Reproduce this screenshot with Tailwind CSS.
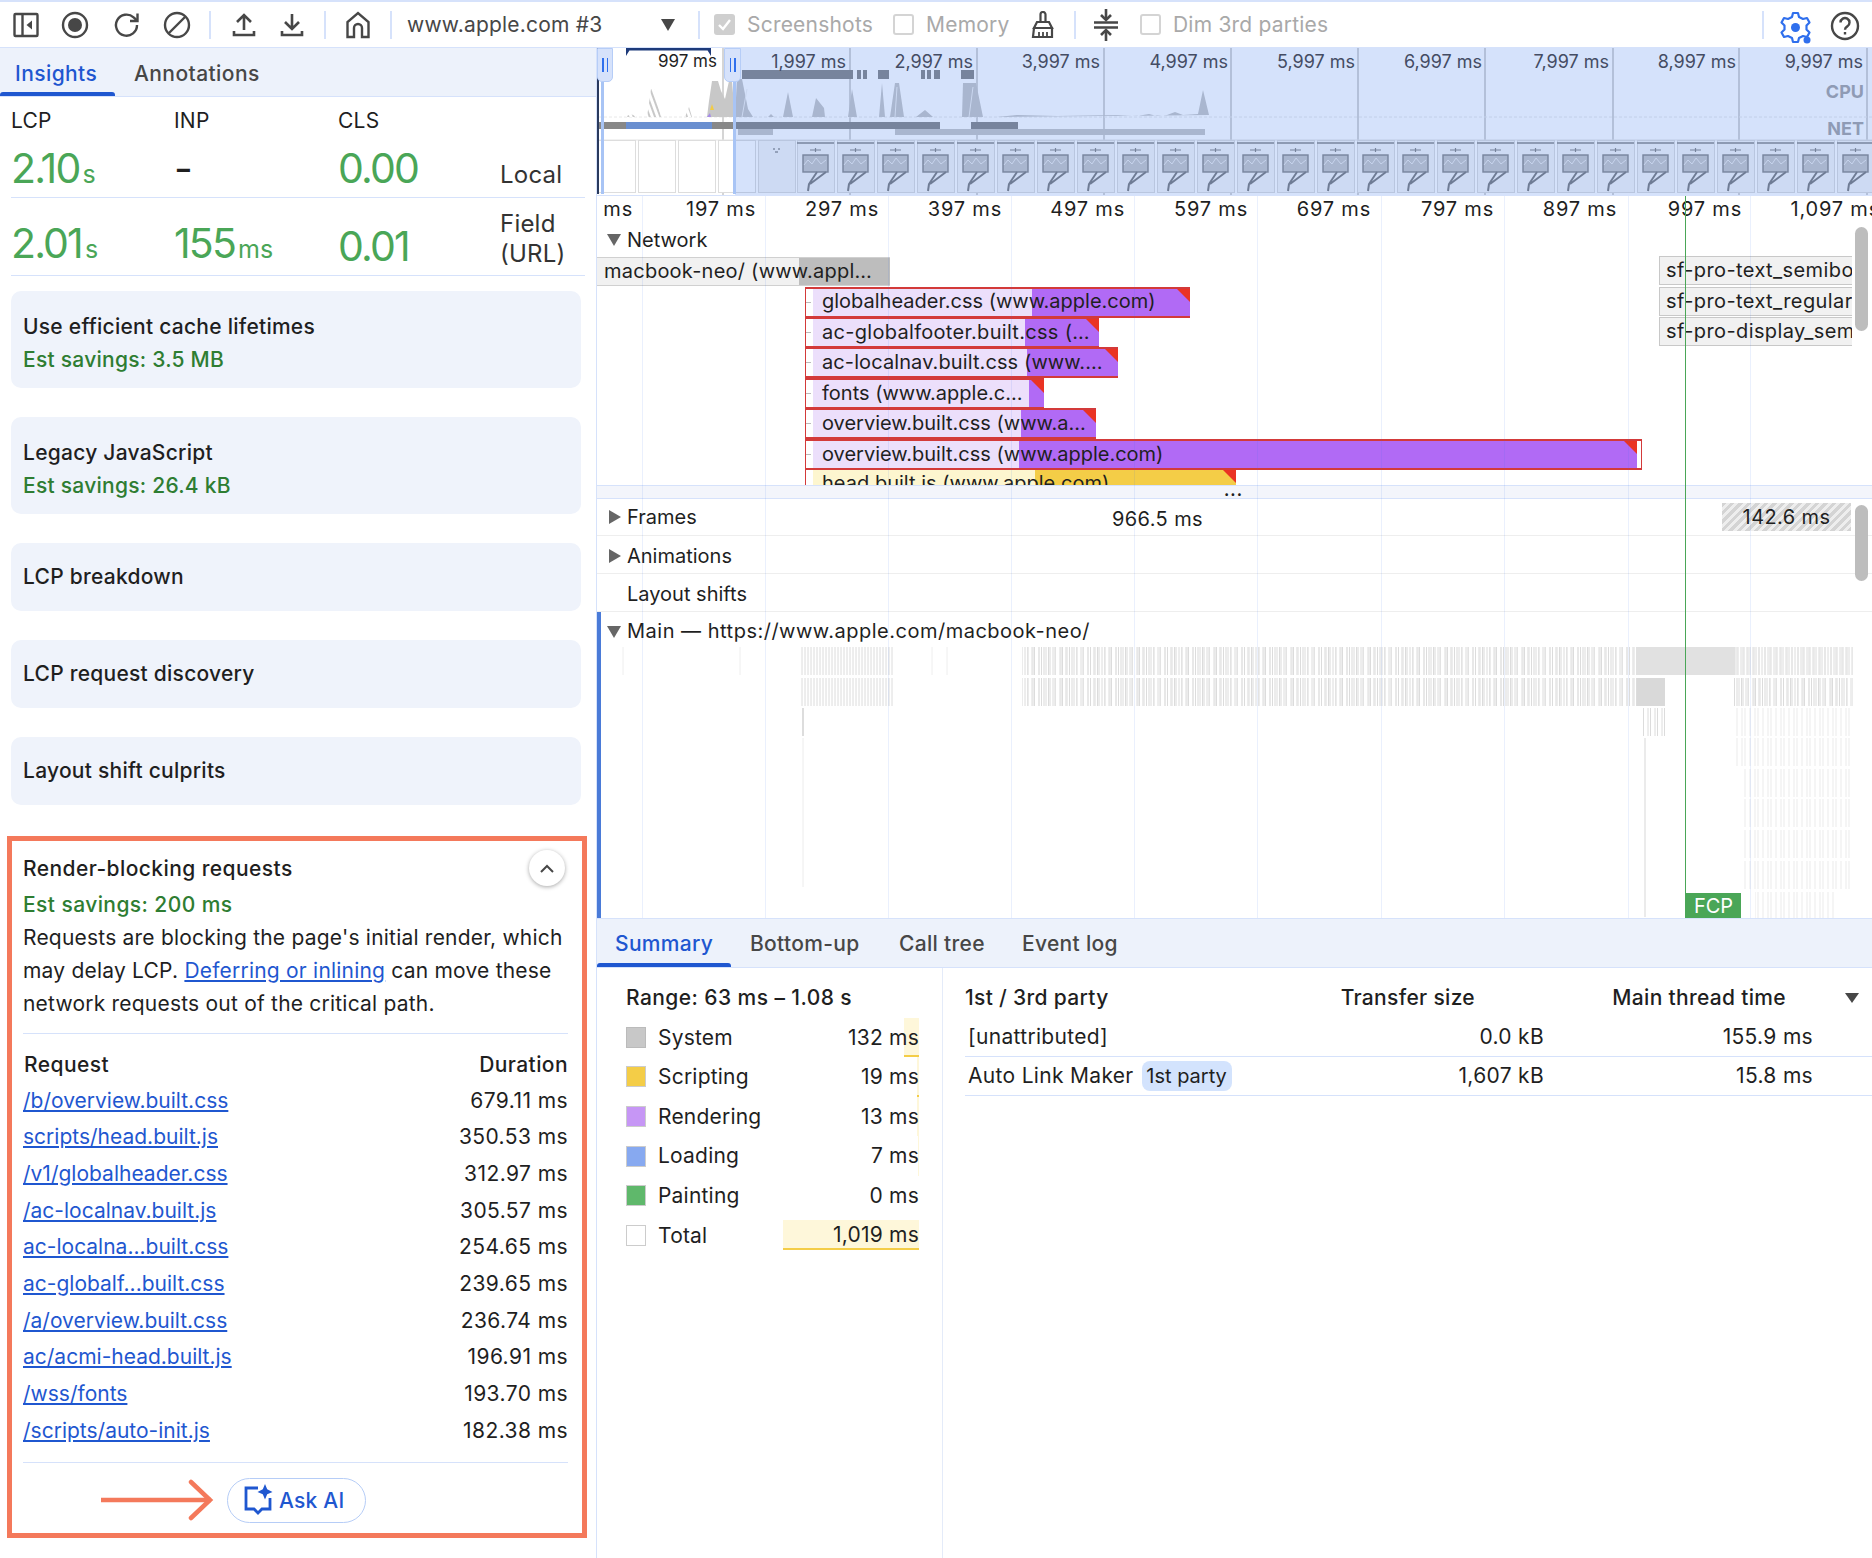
<!DOCTYPE html>
<html lang="en">
<head>
<meta charset="UTF-8">
<title>Performance insights</title>
<script src="https://cdn.jsdelivr.net/npm/@tailwindcss/browser@4"></script>
</head>
<body class="bg-white">
<div class="w-[1872px] h-[1558px] overflow-hidden flex flex-col font-['Inter','Liberation_Sans',sans-serif] text-[21px] tracking-[.01em] text-[#1f1f1f]">

  <!-- toolbar -->
  <header class="h-[48px] shrink-0 border-t-2 border-b border-[#d6e2fb] flex items-center text-[#474747] relative">
    <svg class="w-[26px] h-[26px] ml-[13px]" viewBox="0 0 26 26" fill="none" stroke="#474747" stroke-width="2.4"><rect x="1.5" y="2" width="23" height="22" rx="1"/><path d="M9.5 2v22"/><path d="M19 8.500v9l-5.500-4.500z" fill="#474747" stroke="none"/></svg>
    <svg class="w-[28px] h-[28px] ml-[22px]" viewBox="0 0 28 28" fill="none"><circle cx="14" cy="14" r="12" stroke="#474747" stroke-width="2.4"/><circle cx="14" cy="14" r="7" fill="#474747"/></svg>
    <svg class="w-[28px] h-[28px] ml-[24px]" viewBox="0 0 28 28" fill="none" stroke="#474747" stroke-width="2.4"><path d="M24 14a10.500 10.500 0 1 1-3.400-7.600L24 9.500"/><path d="M24.500 2.500v7.500h-7.500"/></svg>
    <svg class="w-[28px] h-[28px] ml-[22px]" viewBox="0 0 28 28" fill="none" stroke="#474747" stroke-width="2.4"><circle cx="14" cy="14" r="12"/><path d="M6 22L22 6"/></svg>
    <span class="w-[2px] h-[28px] bg-[#d6e2fb] ml-[18px]"></span>
    <svg class="w-[24px] h-[26px] ml-[21px]" viewBox="0 0 24 26" fill="none" stroke="#474747" stroke-width="2.6"><path d="M12 18V3M5 10l7-7 7 7"/><path d="M2 19v4h20v-4"/></svg>
    <svg class="w-[24px] h-[26px] ml-[24px]" viewBox="0 0 24 26" fill="none" stroke="#474747" stroke-width="2.6"><path d="M12 2v15M5 10l7 7 7-7"/><path d="M2 19v4h20v-4"/></svg>
    <span class="w-[2px] h-[28px] bg-[#d6e2fb] ml-[20px]"></span>
    <svg class="w-[26px] h-[28px] ml-[19px]" viewBox="0 0 26 28" fill="none" stroke="#474747" stroke-width="2.4"><path d="M2.500 26V11L13 2l10.500 9v15h-6.500v-9a4 4 0 0 0-8 0v9z"/></svg>
    <span class="w-[2px] h-[28px] bg-[#d6e2fb] ml-[19px]"></span>
    <span class="ml-[15px] w-[254px] whitespace-nowrap text-[#474747]">www.apple.com #3</span>
    <span class="w-0 h-0 border-x-[7px] border-x-transparent border-t-[12px] border-t-[#474747]"></span>
    <span class="w-[2px] h-[28px] bg-[#d6e2fb] ml-[23px]"></span>
    <span class="ml-[14px] w-[21px] h-[21px] rounded-[3px] bg-[#cfcfcf] flex items-center justify-center"><svg class="w-[15px] h-[15px]" viewBox="0 0 15 15" fill="none" stroke="white" stroke-width="2.4"><path d="M2 8l4 4 7-9"/></svg></span>
    <span class="ml-[12px] text-[#a9a9a9] w-[146px]">Screenshots</span>
    <span class="w-[21px] h-[21px] rounded-[3px] border-2 border-[#d4d4d4]"></span>
    <span class="ml-[12px] text-[#a9a9a9] w-[91px]">Memory</span>
    <svg class="w-[26px] h-[28px] ml-[13px]" viewBox="0 0 26 28" fill="none" stroke="#474747" stroke-width="2.2"><path d="M10.500 11V3.500a2.500 2.500 0 0 1 5 0V11"/><path d="M7 11h12l3 6H4z"/><path d="M4 17h18v9H3z"/><path d="M9 21v5M13 21v5M17 21v5" stroke-width="1.800"/></svg>
    <span class="w-[2px] h-[28px] bg-[#d6e2fb] ml-[18px]"></span>
    <svg class="w-[26px] h-[32px] ml-[17px]" viewBox="0 0 26 32" fill="none" stroke="#474747" stroke-width="2.6"><path d="M1 13.500h24M1 18.500h24"/><path d="M13 0v10"/><path d="M13 22v10"/><path d="M8 6l5 5 5-5"/><path d="M8 26l5-5 5 5"/></svg>
    <span class="ml-[21px] w-[21px] h-[21px] rounded-[3px] border-2 border-[#d4d4d4]"></span>
    <span class="ml-[12px] text-[#a9a9a9]">Dim 3rd parties</span>
    <span class="absolute left-[1762px] w-[2px] h-[28px] bg-[#d6e2fb]"></span>
    <svg class="absolute left-[1779px] top-[8px] w-[34px] h-[34px]" viewBox="0 0 34 34" fill="none"><path d="M14 3h5l1 4 4 2 4-1 2.500 4.500-3 3v4l3 3L28 27l-4-1-4 2-1 4h-5l-1-4-4-2-4 1-2.500-4.500 3-3v-4l-3-3L5 8l4 1 4-2z" stroke="#2f6fed" stroke-width="2.200" stroke-linejoin="round"/><circle cx="16.500" cy="17.500" r="4.500" fill="#2f6fed"/><circle cx="28" cy="30" r="3.500" fill="#2f6fed"/></svg>
    <svg class="absolute left-[1830px] top-[9px] w-[30px] h-[30px]" viewBox="0 0 30 30" fill="none" stroke="#474747" stroke-width="2.400"><circle cx="15" cy="15" r="13"/><path d="M10.500 11.500a4.500 4.500 0 1 1 6.800 3.900c-1.500.9-2.300 1.700-2.300 3.300"/><path d="M15 21v2.500"/></svg>
  </header>

  <div class="flex flex-1 min-h-0">
    <!-- insights sidebar -->
    <aside class="w-[597px] shrink-0 border-r border-[#d6e2fb] flex flex-col">
      <nav class="h-[49px] shrink-0 bg-[#edf2fb] border-b border-[#d6e2fb] flex items-stretch font-medium tracking-[.02em]">
        <div class="w-[115px] flex items-center pl-[15px] pt-[3px] text-[#1f57d0] relative">Insights<span class="absolute left-0 bottom-0 w-[115px] h-[4px] rounded-t-[3px] bg-[#1f57d0]"></span></div>
        <div class="flex items-center pl-[19px] pt-[3px] text-[#474747]">Annotations</div>
      </nav>
      <section class="mx-[11px] h-[101px] border-b border-[#d6e2fb] grid grid-cols-[163px_164px_162px_1fr] shrink-0">
        <div class="pt-[8px]">LCP<div class="text-[#4aa657] text-[41px] leading-[46px] tracking-[-0.045em] mt-[8px]">2.10<span class="text-[25px] tracking-normal ml-[3px]">s</span></div></div>
        <div class="pt-[8px]">INP<div class="text-[41px] leading-[46px] mt-[8px]">-</div></div>
        <div class="pt-[8px]">CLS<div class="text-[#4aa657] text-[41px] leading-[46px] tracking-[-0.045em] mt-[8px]">0.00</div></div>
        <div class="pt-[63px] text-[24px] leading-[30px] text-[#333]">Local</div>
      </section>
      <section class="mx-[11px] h-[78px] border-b border-[#d6e2fb] grid grid-cols-[163px_164px_162px_1fr] items-center shrink-0">
        <div class="pt-[19px] text-[#4aa657] text-[41px] leading-[46px] tracking-[-0.045em]">2.01<span class="text-[25px] tracking-normal ml-[3px]">s</span></div>
        <div class="pt-[19px] text-[#4aa657] text-[41px] leading-[46px] tracking-[-0.045em]">155<span class="text-[25px] tracking-normal ml-[3px]">ms</span></div>
        <div class="pt-[19px] text-[#4aa657] text-[41px] leading-[46px] tracking-[-0.045em]">0.01</div>
        <div class="pt-[5px] text-[24px] leading-[30px] text-[#333]">Field (URL)</div>
      </section>

      <div class="ml-[11px] mr-[15px] mt-[15px] flex flex-col gap-[29px] font-medium tracking-[.012em] shrink-0">
        <div class="h-[97px] rounded-[10px] bg-[#eff3fb] px-[12px] pt-[20px]">Use efficient cache lifetimes<div class="text-[#2e7d32] mt-[1px]">Est savings: 3.5 MB</div></div>
        <div class="h-[97px] rounded-[10px] bg-[#eff3fb] px-[12px] pt-[20px]">Legacy JavaScript<div class="text-[#2e7d32] mt-[1px]">Est savings: 26.4 kB</div></div>
        <div class="h-[68px] rounded-[10px] bg-[#eff3fb] px-[12px] flex items-center">LCP breakdown</div>
        <div class="h-[68px] rounded-[10px] bg-[#eff3fb] px-[12px] flex items-center">LCP request discovery</div>
        <div class="h-[68px] rounded-[10px] bg-[#eff3fb] px-[12px] flex items-center">Layout shift culprits</div>
      </div>

      <!-- expanded insight, outlined in orange -->
      <article class="ml-[7px] mt-[31px] w-[580px] h-[702px] border-[5px] border-[#f4795b] pl-[11px] pr-[14px] shrink-0 relative">
        <div class="pt-[14px] h-[50px] font-medium tracking-[.02em] leading-[28px]">Render-blocking requests</div>
        <button class="absolute right-[17px] top-[9px] w-[36px] h-[36px] rounded-full bg-white shadow-[0_1px_4px_rgba(0,0,0,.35)] flex items-center justify-center"><svg class="w-[14px] h-[9px]" viewBox="0 0 14 9" fill="none" stroke="#474747" stroke-width="2"><path d="M1 8l6-6 6 6"/></svg></button>
        <div class="text-[#2e7d32] font-medium tracking-[.02em] leading-[28px]">Est savings: 200 ms</div>
        <p class="leading-[33px] mt-[2px]">Requests are blocking the page's initial render, which may delay LCP. <a class="text-[#1f57d0] underline">Deferring or inlining</a> can move these network requests out of the critical path.</p>
        <div class="border-t border-[#d6e2fb] mt-[13px] pt-[13px] tracking-[.02em]">
          <div class="flex justify-between font-medium h-[35px] items-center"><span class="ml-[1px]">Request</span><span>Duration</span></div>
          <div class="flex justify-between h-[36.700px] items-center"><a class="text-[#1f57d0] underline tracking-normal">/b/overview.built.css</a><span>679.11 ms</span></div>
          <div class="flex justify-between h-[36.700px] items-center"><a class="text-[#1f57d0] underline tracking-normal">scripts/head.built.js</a><span>350.53 ms</span></div>
          <div class="flex justify-between h-[36.700px] items-center"><a class="text-[#1f57d0] underline tracking-normal">/v1/globalheader.css</a><span>312.97 ms</span></div>
          <div class="flex justify-between h-[36.700px] items-center"><a class="text-[#1f57d0] underline tracking-normal">/ac-localnav.built.js</a><span>305.57 ms</span></div>
          <div class="flex justify-between h-[36.700px] items-center"><a class="text-[#1f57d0] underline tracking-normal">ac-localna...built.css</a><span>254.65 ms</span></div>
          <div class="flex justify-between h-[36.700px] items-center"><a class="text-[#1f57d0] underline tracking-normal">ac-globalf...built.css</a><span>239.65 ms</span></div>
          <div class="flex justify-between h-[36.700px] items-center"><a class="text-[#1f57d0] underline tracking-normal">/a/overview.built.css</a><span>236.74 ms</span></div>
          <div class="flex justify-between h-[36.700px] items-center"><a class="text-[#1f57d0] underline tracking-normal">ac/acmi-head.built.js</a><span>196.91 ms</span></div>
          <div class="flex justify-between h-[36.700px] items-center"><a class="text-[#1f57d0] underline tracking-normal">/wss/fonts</a><span>193.70 ms</span></div>
          <div class="flex justify-between h-[36.700px] items-center"><a class="text-[#1f57d0] underline tracking-normal">/scripts/auto-init.js</a><span>182.38 ms</span></div>
        </div>
        <div class="border-t border-[#d6e2fb] mt-[13px] pt-[15px] flex items-center">
          <svg class="ml-[78px] w-[114px] h-[42px]" viewBox="0 0 114 42" fill="none" stroke="#f4795b" stroke-width="4.500"><path d="M0 21h110"/><path d="M90 3l19 18-19 18" stroke-linecap="round"/></svg>
          <button class="ml-[12px] w-[139px] h-[45px] rounded-full border border-[#b6cdf7] flex items-center justify-start pl-[15px] gap-[6px] text-[#1f57d0] font-medium">
            <svg class="w-[30px] h-[32px]" viewBox="0 0 30 32" fill="none"><path d="M15 4H3v21h8l4 4 4-4h8V14" stroke="#1f57d0" stroke-width="2.800"/><path d="M22 0l2.200 5.300L29.500 8l-5.300 2.200L22 15.500l-2.200-5.300L14.500 8l5.300-2.700z" fill="#1f57d0"/></svg>
            Ask AI
          </button>
        </div>
      </article>
    </aside>

    <!-- performance panel -->
    <main class="flex-1 min-w-0 flex flex-col relative">
      <div class="h-[870px] shrink-0 relative overflow-hidden text-[20px] tracking-normal">
        <!-- minimap -->
        <div class="h-[148px] relative overflow-hidden border-b border-[#d6e2fb]">
          <svg class="absolute inset-0" width="1275" height="148" viewBox="0 0 1275 148">
            <defs>
              <pattern id="thumb" x="200" y="92" width="40" height="54" patternUnits="userSpaceOnUse">
                <rect x="0.500" y="0.500" width="37" height="52" fill="#f5f5f5" stroke="#dcdcdc"/>
                <path d="M0 3h37" stroke="#8a8a8a" stroke-width="1.500"/>
                <path d="M13 10h11M18.500 8v4" stroke="#8a8a8a" stroke-width="1.200"/>
                <rect x="6" y="15" width="25" height="17" fill="#c8c8c8" stroke="#8a8a8a" stroke-width="1.400"/>
                <path d="M7 25l4-5 4 4 4-6 5 6 5-4" stroke="#eeeeee" fill="none"/>
                <path d="M20 32l-8 12-1 7M29 32l-16 12" stroke="#808080" stroke-width="2" fill="none"/>
              </pattern>
              <pattern id="hatch" width="5" height="5" patternUnits="userSpaceOnUse" patternTransform="rotate(-20)"><rect width="5" height="5" fill="white"/><path d="M1 0v5" stroke="#c8c8c8" stroke-width="2"/></pattern>
            </defs>
            <path d="M126 0v148M253 0v148M380 0v148M507 0v148M634 0v148M761 0v148M888 0v148M1016 0v148M1142 0v148M1270 0v148" stroke="#c8c8c8" stroke-width="1.500"/>
            <path d="M2 69H1275" stroke="#e8e8e8" stroke-dasharray="3 2"/>
            <!-- cpu activity -->
            <path d="M50 69l4-28 3 0 7 28zM28 69l6-3 6 3zM88 69l4-10 3 10z" fill="url(#hatch)"/>
            <path d="M110 69l2-16 3-20 6 0 3 10 4 8 4-18 3 0 3 36z" fill="#c8c8c8"/>
            <path d="M138 69l2-38 5 0 6 30 5 8zM171 69l3-3 3 3zM186 69l5-25 5 25zM215 69l4-19 8 10 1 9zM251 69l4-28 5 28zM282 69l3-34 3 34zM293 69l5-34 4 0 5 34zM319 69l9-7 8 7zM365 69l1-34 13 0 7 34z" fill="#c8c8c8"/>
            <path d="M145 69l5-28M298 69l2-30M372 69l4-30" stroke="#f2f2f2" fill="none"/>
            <path d="M400 69l20-2 40 1 60-1 20 1 12-2 8 2 10-1 8-3 8 3 15-1 5-24 6 25z" fill="#c8c8c8"/>
            <path d="M110 69l3-4 1 4z" fill="#a68be8"/><path d="M113 62l2-6 2 6z" fill="#f1cb47"/>
            <!-- net -->
            <rect x="145" y="22" width="111" height="9" fill="#8a8a8a"/><rect x="260" y="22" width="4" height="9" fill="#8a8a8a"/><rect x="266" y="22" width="4" height="9" fill="#8a8a8a"/><rect x="281" y="22" width="11" height="9" fill="#8a8a8a"/><rect x="324" y="22" width="4" height="9" fill="#8a8a8a"/><rect x="330" y="22" width="4" height="9" fill="#8a8a8a"/><rect x="337" y="22" width="6" height="9" fill="#8a8a8a"/><rect x="364" y="22" width="13" height="9" fill="#8a8a8a"/>
            <rect x="2" y="74" width="27" height="7" fill="#888"/><rect x="29" y="74" width="86" height="7" fill="#6a8fd0"/><rect x="115" y="74" width="23" height="7" fill="#888"/><rect x="138" y="74" width="205" height="7" fill="#8a8a8a"/><rect x="374" y="74" width="47" height="7" fill="#8a8a8a"/>
            <rect x="141" y="81" width="35" height="6" fill="#c8c8c8"/><rect x="298" y="81" width="310" height="6" fill="#c8c8c8"/>
            <path d="M2 92H1275" stroke="#e4e4e4"/>
            <!-- filmstrip -->
            <rect x="1.500" y="92.500" width="37" height="52" fill="#fff" stroke="#ddd"/><rect x="41.500" y="92.500" width="37" height="52" fill="#fff" stroke="#ddd"/><rect x="81.500" y="92.500" width="37" height="52" fill="#fff" stroke="#ddd"/><rect x="121.500" y="92.500" width="37" height="52" fill="#fff" stroke="#ddd"/><rect x="161.500" y="92.500" width="37" height="52" fill="#f5f5f5" stroke="#dcdcdc"/>
            <path d="M176 101h2M181 101h2M178 104h3" stroke="#666"/>
            <rect x="200" y="92" width="1075" height="54" fill="url(#thumb)"/>
          </svg>
          <div class="absolute left-[138px] top-0 bottom-0 right-0 bg-[#2f6fed]/20"></div>
          <!-- selection window -->
          <div class="absolute left-0 top-0 w-[2px] h-[146px] bg-[#2a3a5e]"></div>
          <div class="absolute left-[29px] top-0 w-[85px] h-[8px] bg-[#1d3a7a] [clip-path:polygon(0_0,100%_0,100%_100%,96%_30%,4%_30%,0_100%)]"></div>
          <div class="absolute left-[4px] top-[34px] w-[3px] h-[112px] bg-[#a8c4f5]"></div>
          <div class="absolute left-[136px] top-[34px] w-[3px] h-[112px] bg-[#a8c4f5]"></div>
          <div class="absolute left-0 top-0 w-[16px] h-[34px] bg-[#d6e2fb] border border-[#b6cdf7] rounded-b-[5px] flex items-center justify-center gap-[3px]"><i class="w-[1.500px] h-[14px] bg-[#2f6fed]"></i><i class="w-[1.500px] h-[14px] bg-[#2f6fed]"></i></div>
          <div class="absolute left-[127px] top-0 w-[17px] h-[34px] bg-[#d6e2fb] border border-[#b6cdf7] rounded-b-[5px] flex items-center justify-center gap-[3px]"><i class="w-[1.500px] h-[14px] bg-[#2f6fed]"></i><i class="w-[1.500px] h-[14px] bg-[#2f6fed]"></i></div>
          <!-- labels -->
          <span class="absolute right-[1155px] top-[1px] whitespace-nowrap text-[17px] text-[#1f1f1f]">997 ms</span>
          <span class="absolute right-[1026px] top-[0px] whitespace-nowrap text-[18px] text-[#444c63]">1,997 ms</span>
          <span class="absolute right-[899px] top-[0px] whitespace-nowrap text-[18px] text-[#444c63]">2,997 ms</span>
          <span class="absolute right-[772px] top-[0px] whitespace-nowrap text-[18px] text-[#444c63]">3,997 ms</span>
          <span class="absolute right-[644px] top-[0px] whitespace-nowrap text-[18px] text-[#444c63]">4,997 ms</span>
          <span class="absolute right-[517px] top-[0px] whitespace-nowrap text-[18px] text-[#444c63]">5,997 ms</span>
          <span class="absolute right-[390px] top-[0px] whitespace-nowrap text-[18px] text-[#444c63]">6,997 ms</span>
          <span class="absolute right-[263px] top-[0px] whitespace-nowrap text-[18px] text-[#444c63]">7,997 ms</span>
          <span class="absolute right-[136px] top-[0px] whitespace-nowrap text-[18px] text-[#444c63]">8,997 ms</span>
          <span class="absolute right-[9px] top-[0px] whitespace-nowrap text-[18px] text-[#444c63]">9,997 ms</span>
          <span class="absolute right-[8px] top-[30px] text-[18px] font-bold text-[#8f9bb5]">CPU</span>
          <span class="absolute right-[8px] top-[67px] text-[18px] font-bold text-[#8f9bb5]">NET</span>
        </div>

        <!-- ruler -->
        <div class="h-[26px] relative overflow-hidden leading-[26px] tracking-[.04em]">
          <span class="absolute right-[1239px] whitespace-nowrap">97 ms</span>
          <span class="absolute right-[1116px] whitespace-nowrap">197 ms</span>
          <span class="absolute right-[993px] whitespace-nowrap">297 ms</span>
          <span class="absolute right-[870px] whitespace-nowrap">397 ms</span>
          <span class="absolute right-[747px] whitespace-nowrap">497 ms</span>
          <span class="absolute right-[624px] whitespace-nowrap">597 ms</span>
          <span class="absolute right-[501px] whitespace-nowrap">697 ms</span>
          <span class="absolute right-[378px] whitespace-nowrap">797 ms</span>
          <span class="absolute right-[255px] whitespace-nowrap">897 ms</span>
          <span class="absolute right-[130px] whitespace-nowrap">997 ms</span>
          <span class="absolute -right-[8px] whitespace-nowrap">1,097 ms</span>
        </div>

        <!-- network track -->
        <div class="h-[263px] relative overflow-hidden">
          <div class="absolute left-[10px] top-[12px] w-0 h-0 border-x-[7px] border-x-transparent border-t-[12px] border-t-[#666]"></div>
          <div class="absolute left-[30px] top-[5px] leading-[26px]">Network</div>

          <div class="absolute left-0 top-[35px] w-[293px] h-[29px] bg-[#f1f1f1] border-y border-[#d0d0d0] overflow-hidden"><div class="absolute left-[202px] inset-y-0 right-0 bg-[#bdbdbd]"></div><span class="absolute left-[7px] top-0 leading-[27px] tracking-[.012em] whitespace-nowrap">macbook-neo/ (www.appl…</span></div>

          <div class="absolute left-[208px] top-[65px] w-[385px] h-[31px] border-y-2 border-l-[1.500px] border-[#d33a3a] flex"><div class="w-[7px] bg-white flex items-center"><i class="w-[5px] h-[1px] bg-[#bbb]"></i></div><div class="w-[219px] bg-[#ecdffb]"></div><div class="flex-1 bg-[#b16af5]"></div><i class="absolute right-0 top-0 w-[13px] h-[13px] bg-[#ea3323] [clip-path:polygon(0_0,100%_0,100%_100%)]"></i><span class="absolute left-[16px] -top-[1px] leading-[27px] whitespace-nowrap">globalheader.css (www.apple.com)</span></div>
          <div class="absolute left-[208px] top-[95px] w-[294px] h-[31px] border-y-2 border-l-[1.500px] border-[#d33a3a] flex"><div class="w-[7px] bg-white flex items-center"><i class="w-[5px] h-[1px] bg-[#bbb]"></i></div><div class="w-[212px] bg-[#ecdffb]"></div><div class="flex-1 bg-[#b16af5]"></div><i class="absolute right-0 top-0 w-[13px] h-[13px] bg-[#ea3323] [clip-path:polygon(0_0,100%_0,100%_100%)]"></i><span class="absolute left-[16px] top-0 leading-[27px] tracking-[.015em] whitespace-nowrap">ac-globalfooter.built.css (…</span></div>
          <div class="absolute left-[208px] top-[125px] w-[313px] h-[31px] border-y-2 border-l-[1.500px] border-[#d33a3a] flex"><div class="w-[7px] bg-white flex items-center"><i class="w-[5px] h-[1px] bg-[#bbb]"></i></div><div class="w-[214px] bg-[#ecdffb]"></div><div class="flex-1 bg-[#b16af5]"></div><i class="absolute right-0 top-0 w-[13px] h-[13px] bg-[#ea3323] [clip-path:polygon(0_0,100%_0,100%_100%)]"></i><span class="absolute left-[16px] top-0 leading-[27px] tracking-[.005em] whitespace-nowrap">ac-localnav.built.css (www.…</span></div>
          <div class="absolute left-[208px] top-[156px] w-[239px] h-[31px] border-y-2 border-l-[1.500px] border-[#d33a3a] flex"><div class="w-[7px] bg-white flex items-center"><i class="w-[5px] h-[1px] bg-[#bbb]"></i></div><div class="w-[216px] bg-[#ecdffb]"></div><div class="flex-1 bg-[#b16af5]"></div><i class="absolute right-0 top-0 w-[13px] h-[13px] bg-[#ea3323] [clip-path:polygon(0_0,100%_0,100%_100%)]"></i><span class="absolute left-[16px] top-0 leading-[27px] whitespace-nowrap">fonts (www.apple.c…</span></div>
          <div class="absolute left-[208px] top-[186px] w-[291px] h-[31px] border-y-2 border-l-[1.500px] border-[#d33a3a] flex"><div class="w-[7px] bg-white flex items-center"><i class="w-[5px] h-[1px] bg-[#bbb]"></i></div><div class="w-[208px] bg-[#ecdffb]"></div><div class="flex-1 bg-[#b16af5]"></div><i class="absolute right-0 top-0 w-[13px] h-[13px] bg-[#ea3323] [clip-path:polygon(0_0,100%_0,100%_100%)]"></i><span class="absolute left-[16px] top-0 leading-[27px] whitespace-nowrap">overview.built.css (www.a…</span></div>
          <div class="absolute left-[208px] top-[217px] w-[837px] h-[31px] border-y-2 border-x-[1.500px] border-[#d33a3a] flex"><div class="w-[7px] bg-white flex items-center"><i class="w-[5px] h-[1px] bg-[#bbb]"></i></div><div class="w-[206px] bg-[#ecdffb]"></div><div class="flex-1 bg-[#b16af5]"></div><div class="w-[4px] bg-white"></div><i class="absolute right-[4px] top-0 w-[13px] h-[13px] bg-[#ea3323] [clip-path:polygon(0_0,100%_0,100%_100%)]"></i><span class="absolute left-[16px] top-0 leading-[27px] whitespace-nowrap">overview.built.css (www.apple.com)</span></div>
          <div class="absolute left-[208px] top-[248px] w-[431px] h-[31px] border-l-[1.500px] border-[#d33a3a] flex"><div class="w-[7px] bg-white"></div><div class="w-[222px] bg-[#fdf6cf]"></div><div class="flex-1 bg-[#f4cd47]"></div><i class="absolute right-0 top-0 w-[13px] h-[13px] bg-[#ea3323] [clip-path:polygon(0_0,100%_0,100%_100%)]"></i><span class="absolute left-[16px] top-0 leading-[27px] whitespace-nowrap">head.built.js (www.apple.com)</span></div>

          <div class="absolute left-[1062px] top-[34px] w-[193px] h-[29px] bg-[#f1f1f1] border-y border-l border-[#c8c8c8] overflow-hidden"><span class="absolute left-[6px] top-0 leading-[27px] tracking-[.02em] whitespace-nowrap">sf-pro-text_semibold</span></div>
          <div class="absolute left-[1062px] top-[65px] w-[193px] h-[29px] bg-[#f1f1f1] border-y border-l border-[#c8c8c8] overflow-hidden"><span class="absolute left-[6px] top-0 leading-[27px] tracking-[.02em] whitespace-nowrap">sf-pro-text_regular</span></div>
          <div class="absolute left-[1062px] top-[95px] w-[193px] h-[29px] bg-[#f1f1f1] border-y border-l border-[#c8c8c8] overflow-hidden"><span class="absolute left-[6px] top-0 leading-[27px] tracking-[.02em] whitespace-nowrap">sf-pro-display_semibold</span></div>
        </div>
        <div class="h-[14px] bg-[#f3f5fb] border-y border-[#d6e2fb] relative"><span class="absolute left-[627px] -top-[7px] text-[16px] font-bold tracking-[1px] leading-[22px]">...</span></div>

        <!-- tracks -->
        <div class="h-[37px] border-b border-[#eee] relative flex items-center pl-[12px]">
          <i class="w-0 h-0 border-y-[7px] border-y-transparent border-l-[12px] border-l-[#666] mr-[6px]"></i><span>Frames</span>
          <span class="absolute left-[515px] top-[5px] tracking-[.02em]">966.5 ms</span>
          <span class="absolute left-[1125px] top-[4px] w-[129px] h-[28px] flex items-center justify-center tracking-[.02em] bg-[repeating-linear-gradient(135deg,#d4d4d4_0_3px,#eeeeee_3px_6px)]">142.6 ms</span>
        </div>
        <div class="h-[38px] border-b border-[#eee] flex items-center pl-[12px] pt-[2px]"><i class="w-0 h-0 border-y-[7px] border-y-transparent border-l-[12px] border-l-[#666] mr-[6px]"></i><span>Animations</span></div>
        <div class="h-[38px] border-b border-[#eee] flex items-center pl-[30px] pt-[2px]">Layout shifts</div>

        <!-- main thread -->
        <div class="h-[306px] relative border-l-[4px] border-[#4a7bd8]">
          <div class="absolute left-[6px] top-[14px] w-0 h-0 border-x-[7px] border-x-transparent border-t-[12px] border-t-[#666]"></div>
          <div class="absolute left-[26px] top-[6px] leading-[26px] tracking-[.025em]">Main — https://www.apple.com/macbook-neo/</div>
          <svg class="absolute left-[-4px] top-[35px]" width="1275" height="271" viewBox="0 0 1275 271">
            <defs>
              <pattern id="ba" width="7" height="30" patternUnits="userSpaceOnUse"><path d="M1 0v30M3.500 0v30" stroke="#dcdcdc"/></pattern>
              <pattern id="bb" width="11" height="30" patternUnits="userSpaceOnUse"><path d="M2 0v30M7 0v30" stroke="#e6e6e6" stroke-width="1.500"/></pattern>
              <pattern id="bc" width="3" height="30" patternUnits="userSpaceOnUse"><path d="M1 0v30" stroke="#dcdcdc"/></pattern>
              <pattern id="bd" width="13" height="30" patternUnits="userSpaceOnUse"><path d="M1 0v30M4 0v30M9 0v30" stroke="#ebebeb"/></pattern>
            </defs>
            <path d="M26 0v28M143 0v28M335 0v28M350 0v28" stroke="#eee"/>
            <rect x="203" y="0" width="93" height="28" fill="url(#bc)"/>
            <rect x="425" y="0" width="614" height="28" fill="url(#ba)"/><rect x="425" y="0" width="614" height="28" fill="url(#bb)"/>
            <rect x="1039" y="0" width="99" height="28" fill="#e1e1e1"/>
            <rect x="1138" y="0" width="118" height="28" fill="url(#bc)"/><rect x="1138" y="0" width="118" height="28" fill="url(#bb)"/>
            <rect x="203" y="31" width="93" height="28" fill="url(#bc)"/>
            <rect x="425" y="31" width="620" height="28" fill="url(#ba)"/><rect x="425" y="31" width="620" height="28" fill="url(#bb)"/><rect x="1040" y="31" width="28" height="28" fill="#d9d9d9"/>
            <rect x="1136" y="31" width="120" height="28" fill="url(#ba)"/><rect x="1136" y="31" width="120" height="28" fill="url(#bb)"/>
            <path d="M206 61v28" stroke="#ddd" stroke-width="2"/><rect x="1045" y="61" width="23" height="28" fill="url(#ba)"/>
            <rect x="1136" y="61" width="120" height="28" fill="url(#bd)"/>
            <path d="M206 91v149" stroke="#ececec"/><path d="M1048 91v179" stroke="#ebebeb" stroke-width="2"/>
            <rect x="1136" y="91" width="120" height="28" fill="url(#bd)"/>
            <rect x="1146" y="122" width="110" height="28" fill="url(#bd)"/><rect x="1146" y="152" width="110" height="28" fill="url(#bd)"/><rect x="1146" y="183" width="110" height="28" fill="url(#bd)"/><rect x="1146" y="214" width="110" height="28" fill="url(#bd)"/><rect x="1158" y="245" width="80" height="26" fill="url(#bd)"/>
          </svg>
          <div class="absolute left-[1085px] bottom-0 w-[55px] h-[25px] bg-[#4aa657] text-white flex items-center justify-center">FCP</div>
        </div>

        <!-- grid lines and FCP marker sit over the tracks -->
        <div class="absolute left-[45px] top-[148px] bottom-0 w-[1px] bg-[#2f6fed]/10"></div>
        <div class="absolute left-[168px] top-[148px] bottom-0 w-[1px] bg-[#2f6fed]/10"></div>
        <div class="absolute left-[291px] top-[148px] bottom-0 w-[1px] bg-[#2f6fed]/10"></div>
        <div class="absolute left-[414px] top-[148px] bottom-0 w-[1px] bg-[#2f6fed]/10"></div>
        <div class="absolute left-[537px] top-[148px] bottom-0 w-[1px] bg-[#2f6fed]/10"></div>
        <div class="absolute left-[660px] top-[148px] bottom-0 w-[1px] bg-[#2f6fed]/10"></div>
        <div class="absolute left-[784px] top-[148px] bottom-0 w-[1px] bg-[#2f6fed]/10"></div>
        <div class="absolute left-[907px] top-[148px] bottom-0 w-[1px] bg-[#2f6fed]/10"></div>
        <div class="absolute left-[1031px] top-[148px] bottom-0 w-[1px] bg-[#2f6fed]/10"></div>
        <div class="absolute left-[1153px] top-[148px] bottom-0 w-[1px] bg-[#2f6fed]/10"></div>
        <div class="absolute left-[1088px] top-[148px] bottom-0 w-[1px] bg-[#4aa657]"></div>

        <!-- scrollbars -->
        <div class="absolute left-[1258px] top-[179px] w-[13px] h-[104px] rounded-full bg-[#bdbdbd]"></div>
        <div class="absolute left-[1258px] top-[457px] w-[13px] h-[76px] rounded-full bg-[#bdbdbd]"></div>
      </div>

      <!-- details pane -->
      <nav class="h-[50px] shrink-0 bg-[#edf2fb] border-y border-[#d6e2fb] flex items-stretch font-medium tracking-[.015em] text-[#474747] relative">
        <span class="w-[134px] pl-[18px] pt-[2px] flex items-center text-[#1f57d0]">Summary</span>
        <span class="ml-[19px] w-[126px] pt-[2px] flex items-center">Bottom-up</span>
        <span class="ml-[23px] w-[123px] pt-[2px] flex items-center">Call tree</span>
        <span class="pt-[2px] flex items-center">Event log</span>
        <i class="absolute left-0 bottom-0 w-[134px] h-[4px] rounded-t-[3px] bg-[#1f57d0]"></i>
      </nav>
      <div class="flex flex-1 min-h-0">
        <section class="w-[346px] shrink-0 border-r border-[#e4ebf9] pt-[10px] pl-[29px] pr-[23px]">
          <div class="h-[39.600px] flex items-center font-medium tracking-[.02em] whitespace-nowrap">Range: 63 ms – 1.08 s</div>
          <div class="h-[39.600px] flex items-center"><i class="w-[20px] h-[21px] bg-[#c8c8c8] border border-[#bbb] mr-[12px]"></i>System<span class="ml-auto relative"><i class="absolute right-0 -top-[4px] -bottom-[4px] w-[15px] bg-[#fef7da] border-b-2 border-[#f4cd47] -z-10"></i>132 ms</span></div>
          <div class="h-[39.600px] flex items-center"><i class="w-[20px] h-[21px] bg-[#f4cd47] border border-[#ccc] mr-[12px]"></i>Scripting<span class="ml-auto relative"><i class="absolute right-0 -top-[4px] -bottom-[4px] w-[2px] bg-[#fef7da] border-b-2 border-[#f4cd47] -z-10"></i>19 ms</span></div>
          <div class="h-[39.600px] flex items-center"><i class="w-[20px] h-[21px] bg-[#c696f5] border border-[#ccc] mr-[12px]"></i>Rendering<span class="ml-auto relative"><i class="absolute right-0 -top-[4px] -bottom-[4px] w-[2px] bg-[#fef7da] -z-10"></i>13 ms</span></div>
          <div class="h-[39.600px] flex items-center"><i class="w-[20px] h-[21px] bg-[#87a9f0] border border-[#ccc] mr-[12px]"></i>Loading<span class="ml-auto relative"><i class="absolute right-0 -top-[4px] -bottom-[4px] w-[1px] bg-[#fef7da] -z-10"></i>7 ms</span></div>
          <div class="h-[39.600px] flex items-center"><i class="w-[20px] h-[21px] bg-[#5fb86b] border border-[#ccc] mr-[12px]"></i>Painting<span class="ml-auto">0 ms</span></div>
          <div class="h-[39.600px] flex items-center"><i class="w-[20px] h-[21px] bg-white border border-[#ccc] mr-[12px]"></i>Total<span class="ml-auto w-[136px] h-[30px] bg-[#fef7da] border-b-2 border-[#f4cd47] flex items-center justify-end">1,019 ms</span></div>
        </section>
        <section class="flex-1 pl-[22px] pt-[10px] tracking-[.015em]">
          <div class="h-[40px] flex items-center font-medium"><span class="w-[510px] flex justify-between"><span>1st / 3rd party</span><span>Transfer size</span></span><span class="w-[311px] text-right">Main thread time</span><i class="ml-[59px] w-0 h-0 border-x-[7px] border-x-transparent border-t-[10px] border-t-[#474747]"></i></div>
          <div class="h-[39px] flex items-center border-b border-[#d6e2fb] pl-[3px]"><span class="w-[576px] flex justify-between"><span>[unattributed]</span><span>0.0 kB</span></span><span class="w-[269px] text-right">155.9 ms</span></div>
          <div class="h-[39px] flex items-center border-b border-[#d6e2fb] pl-[3px]"><span class="w-[576px] flex items-center"><span>Auto Link Maker</span><span class="ml-[8px] w-[90px] h-[30px] rounded-[8px] bg-[#d3e3fd] text-center leading-[30px] text-[20px] tracking-normal">1st party</span><span class="ml-auto">1,607 kB</span></span><span class="w-[269px] text-right">15.8 ms</span></div>
        </section>
      </div>
    </main>
  </div>
</div>
</body>
</html>
